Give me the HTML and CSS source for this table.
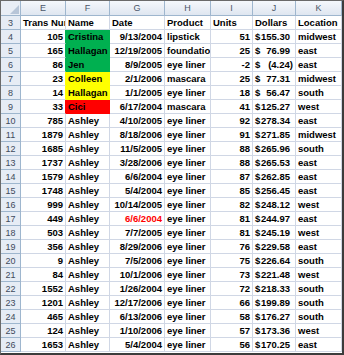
FILE: index.html
```html
<!DOCTYPE html>
<html>
<head>
<meta charset="utf-8">
<link rel="stylesheet" href="styles.css">
</head>
<body>
<div class="sheet">
  <div class="corner"><svg class="tri" width="10" height="10" viewBox="0 0 10 10"><polygon points="10,1 10,10 1,10" fill="#b7c5d8"/></svg></div>
  <div class="ch">E</div><div class="ch">F</div><div class="ch">G</div><div class="ch">H</div><div class="ch">I</div><div class="ch">J</div><div class="ch">K</div>

  <div class="rh">3</div><div class="c">Trans Number</div><div class="c">Name</div><div class="c">Date</div><div class="c">Product</div><div class="c">Units</div><div class="c">Dollars</div><div class="c">Location</div>

  <div class="rh">4</div><div class="c r pre-green">105</div><div class="c green">Cristina</div><div class="c r">9/13/2004</div><div class="c">lipstick</div><div class="c r">51</div><div class="c acc"><span>$</span><span class="amt">155.30</span></div><div class="c">midwest</div>
  <div class="rh">5</div><div class="c r pre-green">165</div><div class="c green">Hallagan</div><div class="c r">12/19/2005</div><div class="c">foundation</div><div class="c r">25</div><div class="c acc"><span>$</span><span class="amt">76.99</span></div><div class="c">east</div>
  <div class="rh">6</div><div class="c r pre-green">86</div><div class="c green">Jen</div><div class="c r">8/9/2005</div><div class="c">eye liner</div><div class="c r">-2</div><div class="c acc"><span>$</span><span class="amt neg">(4.24)</span></div><div class="c">east</div>
  <div class="rh">7</div><div class="c r pre-yellow">23</div><div class="c yellow">Colleen</div><div class="c r">2/1/2006</div><div class="c">mascara</div><div class="c r">25</div><div class="c acc"><span>$</span><span class="amt">77.31</span></div><div class="c">midwest</div>
  <div class="rh">8</div><div class="c r pre-yellow">14</div><div class="c yellow">Hallagan</div><div class="c r">1/1/2005</div><div class="c">eye liner</div><div class="c r">18</div><div class="c acc"><span>$</span><span class="amt">56.47</span></div><div class="c">south</div>
  <div class="rh">9</div><div class="c r pre-red">33</div><div class="c red">Cici</div><div class="c r">6/17/2004</div><div class="c">mascara</div><div class="c r">41</div><div class="c acc"><span>$</span><span class="amt">125.27</span></div><div class="c">west</div>
  <div class="rh">10</div><div class="c r">785</div><div class="c">Ashley</div><div class="c r">4/10/2005</div><div class="c">eye liner</div><div class="c r">92</div><div class="c acc"><span>$</span><span class="amt">278.34</span></div><div class="c">east</div>
  <div class="rh">11</div><div class="c r">1879</div><div class="c">Ashley</div><div class="c r">8/18/2006</div><div class="c">eye liner</div><div class="c r">91</div><div class="c acc"><span>$</span><span class="amt">271.85</span></div><div class="c">midwest</div>
  <div class="rh">12</div><div class="c r">1685</div><div class="c">Ashley</div><div class="c r">11/5/2005</div><div class="c">eye liner</div><div class="c r">88</div><div class="c acc"><span>$</span><span class="amt">265.96</span></div><div class="c">south</div>
  <div class="rh">13</div><div class="c r">1737</div><div class="c">Ashley</div><div class="c r">3/28/2006</div><div class="c">eye liner</div><div class="c r">88</div><div class="c acc"><span>$</span><span class="amt">265.53</span></div><div class="c">east</div>
  <div class="rh">14</div><div class="c r">1579</div><div class="c">Ashley</div><div class="c r">6/6/2004</div><div class="c">eye liner</div><div class="c r">87</div><div class="c acc"><span>$</span><span class="amt">262.85</span></div><div class="c">east</div>
  <div class="rh">15</div><div class="c r">1748</div><div class="c">Ashley</div><div class="c r">5/4/2004</div><div class="c">eye liner</div><div class="c r">85</div><div class="c acc"><span>$</span><span class="amt">256.45</span></div><div class="c">east</div>
  <div class="rh">16</div><div class="c r">999</div><div class="c">Ashley</div><div class="c r">10/14/2005</div><div class="c">eye liner</div><div class="c r">82</div><div class="c acc"><span>$</span><span class="amt">248.12</span></div><div class="c">west</div>
  <div class="rh">17</div><div class="c r">449</div><div class="c">Ashley</div><div class="c r redtext">6/6/2004</div><div class="c">eye liner</div><div class="c r">81</div><div class="c acc"><span>$</span><span class="amt">244.97</span></div><div class="c">east</div>
  <div class="rh">18</div><div class="c r">503</div><div class="c">Ashley</div><div class="c r">7/7/2005</div><div class="c">eye liner</div><div class="c r">81</div><div class="c acc"><span>$</span><span class="amt">245.19</span></div><div class="c">west</div>
  <div class="rh">19</div><div class="c r">356</div><div class="c">Ashley</div><div class="c r">8/29/2006</div><div class="c">eye liner</div><div class="c r">76</div><div class="c acc"><span>$</span><span class="amt">229.58</span></div><div class="c">east</div>
  <div class="rh">20</div><div class="c r">9</div><div class="c">Ashley</div><div class="c r">7/5/2006</div><div class="c">eye liner</div><div class="c r">75</div><div class="c acc"><span>$</span><span class="amt">226.64</span></div><div class="c">south</div>
  <div class="rh">21</div><div class="c r">84</div><div class="c">Ashley</div><div class="c r">10/1/2006</div><div class="c">eye liner</div><div class="c r">73</div><div class="c acc"><span>$</span><span class="amt">221.48</span></div><div class="c">west</div>
  <div class="rh">22</div><div class="c r">1552</div><div class="c">Ashley</div><div class="c r">1/26/2004</div><div class="c">eye liner</div><div class="c r">72</div><div class="c acc"><span>$</span><span class="amt">218.33</span></div><div class="c">south</div>
  <div class="rh">23</div><div class="c r">1201</div><div class="c">Ashley</div><div class="c r">12/17/2006</div><div class="c">eye liner</div><div class="c r">66</div><div class="c acc"><span>$</span><span class="amt">199.89</span></div><div class="c">south</div>
  <div class="rh">24</div><div class="c r">465</div><div class="c">Ashley</div><div class="c r">6/13/2006</div><div class="c">eye liner</div><div class="c r">58</div><div class="c acc"><span>$</span><span class="amt">176.27</span></div><div class="c">south</div>
  <div class="rh">25</div><div class="c r">124</div><div class="c">Ashley</div><div class="c r">1/10/2006</div><div class="c">eye liner</div><div class="c r">57</div><div class="c acc"><span>$</span><span class="amt">173.36</span></div><div class="c">west</div>
  <div class="rh">26</div><div class="c r">1653</div><div class="c">Ashley</div><div class="c r">5/4/2004</div><div class="c">eye liner</div><div class="c r">56</div><div class="c acc"><span>$</span><span class="amt">170.25</span></div><div class="c">east</div>
</div>
</body>
</html>
```
FILE: styles.css
```css
html, body {
  margin: 0;
  padding: 0;
  background: #ffffff;
}
.sheet {
  width: 344px;
  height: 355px;
  box-sizing: border-box;
  border-top: 1px solid #6a6a6a;
  border-left: 1px solid #6a6a6a;
  border-right: 2px solid #3c3c3c;
  border-bottom: 2px solid #3c3c3c;
  display: grid;
  grid-template-columns: 20px 45px 44px 55px 46px 42px 43px 46px;
  grid-template-rows: 15px repeat(24, 14px);
  overflow: hidden;
  font-family: "Liberation Sans", Arial, sans-serif;
  font-size: 9.5px;
  font-weight: bold;
  color: #000;
}
.corner {
  background: #e9eef6;
  border-right: 1px solid #9eb6ce;
  border-bottom: 1px solid #9eb6ce;
  display: flex;
  justify-content: flex-end;
  align-items: flex-end;
  padding: 0 1px 1px 0;
}
.tri { display: block; }
.ch {
  background: linear-gradient(#f5f8fc, #dfe6f0);
  border-right: 1px solid #9eb6ce;
  border-bottom: 1px solid #9eb6ce;
  color: #4a5668;
  font-weight: normal;
  font-size: 9px;
  display: flex;
  align-items: center;
  justify-content: center;
}
.rh {
  background: #e6ecf5;
  border-right: 1px solid #9eb6ce;
  border-bottom: 1px solid #9eb6ce;
  color: #3e4a5c;
  font-weight: normal;
  font-size: 9px;
  display: flex;
  align-items: center;
  justify-content: center;
}
.c {
  border-right: 1px solid #d0d7e5;
  border-bottom: 1px solid #d0d7e5;
  padding: 0 2px;
  white-space: nowrap;
  overflow: hidden;
  line-height: 13px;
  text-align: left;
}
.r { text-align: right; }
.acc {
  display: flex;
  justify-content: space-between;
}
.amt { padding-right: 3px; }
.amt.neg { padding-right: 0; }
.green { background: #00b050; border-color: #00b050; }
.yellow { background: #ffff00; border-color: #ffff00; }
.red { background: #ff0000; border-color: #ff0000; }
.pre-green { border-right-color: #00b050; }
.pre-yellow { border-right-color: #ffff00; }
.pre-red { border-right-color: #ff0000; }
.redtext { color: #ff0000; }
```
